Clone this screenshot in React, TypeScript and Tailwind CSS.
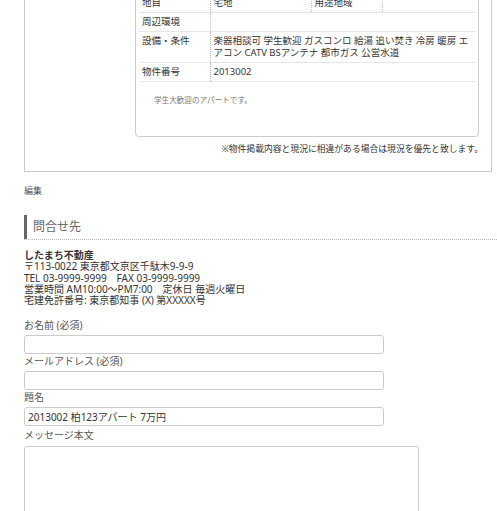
// App.tsx — property detail page, scrolled to the contact form

const FONT = "font-['Noto_Sans','Noto_Sans_CJK_JP',sans-serif]";

const COMPANY_LINES = [
  "〒113-0022 東京都文京区千駄木9-9-9",
  "TEL 03-9999-9999　FAX 03-9999-9999",
  "営業時間 AM10:00～PM7:00　定休日 毎週火曜日",
  "宅建免許番号: 東京都知事 (X) 第XXXXX号",
];

function Field({ label, value }: { label: string; value?: string }) {
  return (
    <div>
      <p className="text-[10px] leading-[15px] text-[#555] mb-[2px]">{label}</p>
      <input
        type="text"
        readOnly
        value={value ?? ""}
        className="block w-[360px] h-[19px] border border-[#ccc] rounded-[3px] px-[3px] text-[10px] text-[#333] bg-white outline-none"
      />
    </div>
  );
}

export default function App() {
  return (
    <div className={`${FONT} bg-white text-[#333] w-[497px] min-h-[511px] overflow-hidden`}>
      <div className="-mt-[40px]">
        {/* Property box */}
        <div className="ml-[24px] w-[468px] border border-[#ccc] pt-[28px] pb-[16px]">
          <div className="ml-[110px] w-[344px] border border-[#ccc] rounded-[4px] pt-[4px] pl-[3px] pr-[2px] pb-[30px]">
            <table className="w-[337px] border-collapse text-[9.5px] leading-[12px] table-fixed">
              <colgroup>
                <col className="w-[71px]" />
                <col className="w-[101px]" />
                <col className="w-[71px]" />
                <col />
              </colgroup>
              <tbody>
                <tr className="border-b border-[#e6e6e6]">
                  <td className="px-[3px] py-[3px]">地目</td>
                  <td className="px-[3px] py-[3px] border-l border-dotted border-[#bbb]">宅地</td>
                  <td className="px-[3px] py-[3px] border-l border-dotted border-[#bbb]">用途地域</td>
                  <td className="px-[3px] py-[3px] border-l border-dotted border-[#bbb]"></td>
                </tr>
                <tr className="border-b border-[#e6e6e6]">
                  <td className="px-[3px] py-[3px]">周辺環境</td>
                  <td colSpan={3} className="px-[3px] py-[3px] border-l border-dotted border-[#bbb] h-[18px]"></td>
                </tr>
                <tr className="border-b border-[#e6e6e6]">
                  <td className="px-[3px] py-[3px] align-top">設備・条件</td>
                  <td colSpan={3} className="px-[3px] py-[3px] border-l border-dotted border-[#bbb]">
                    楽器相談可 学生歓迎 ガスコンロ 給湯 追い焚き 冷房 暖房 エ<br />
                    アコン CATV BSアンテナ 都市ガス 公営水道
                  </td>
                </tr>
                <tr className="border-b border-[#e6e6e6]">
                  <td className="px-[3px] py-[3px]">物件番号</td>
                  <td colSpan={3} className="px-[3px] py-[3px] border-l border-dotted border-[#bbb]">2013002</td>
                </tr>
              </tbody>
            </table>
            <p className="mt-[12px] ml-[15px] text-[7.6px] leading-[12px] text-[#777]">学生大歓迎のアパートです。</p>
          </div>
          <p className="mt-[6px] pr-[8px] text-right text-[8.8px] leading-[12px]">
            ※物件掲載内容と現況に相違がある場合は現況を優先と致します。
          </p>
        </div>

        <p className="ml-[24px] mt-[13px] text-[9px] leading-[12px] text-[#555]">編集</p>

        {/* Contact */}
        <div className="ml-[24px] mt-[18px]">
          <h2 className="border-l-[3px] border-[#666] pl-[6px] h-[24px] flex items-center text-[12px] text-[#666] font-normal">
            問合せ先
          </h2>
          <div className="border-b border-dotted border-[#bbb]" />

          <div className="mt-[10px] text-[10px] leading-[11.3px]">
            <p className="font-bold">したまち不動産</p>
            {COMPANY_LINES.map((line) => (
              <p key={line}>{line}</p>
            ))}
          </div>

          <div className="mt-[12px] flex flex-col">
            <Field label="お名前 (必須)" />
            <Field label="メールアドレス (必須)" />
            <Field label="題名" value="2013002 柏123アパート 7万円" />
            <div className="mt-[2px]">
              <p className="text-[10px] leading-[15px] text-[#555] mb-[3px]">メッセージ本文</p>
              <textarea
                readOnly
                className="block w-[395px] h-[120px] border border-[#ccc] rounded-[3px] bg-white outline-none resize-none"
              />
            </div>
          </div>
        </div>
      </div>
    </div>
  );
}
